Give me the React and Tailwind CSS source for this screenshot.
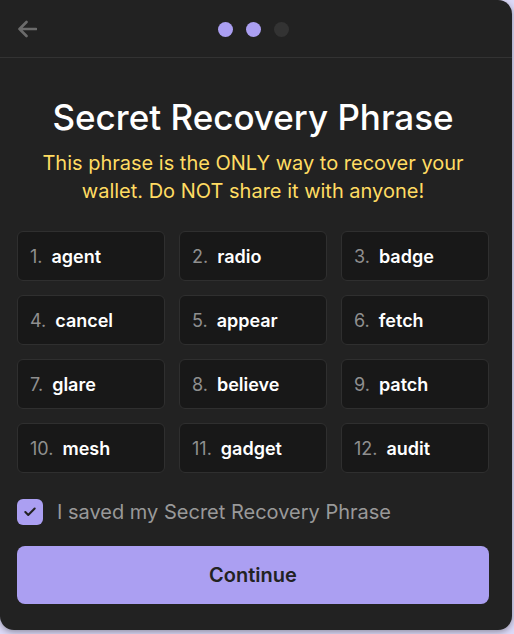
import { Check } from 'lucide-react';

const words = [
  'agent', 'radio', 'badge',
  'cancel', 'appear', 'fetch',
  'glare', 'believe', 'patch',
  'mesh', 'gadget', 'audit',
];

function BackArrow() {
  return (
    <svg width="20" height="18" viewBox="0 0 20 18" fill="none" className="absolute left-0">
      <path d="M19 9H2.5M9.5 2L2.5 9L9.5 16" stroke="#6b6b6b" strokeWidth="2.6" strokeLinecap="round" strokeLinejoin="round" />
    </svg>
  );
}

export default function App() {
  return (
    <div className="min-h-screen w-full bg-[#dcd9f7] font-['Inter',sans-serif]">
      <div className="flex h-[630px] w-[512px] flex-col rounded-tr-[14px] rounded-b-[14px] bg-[#222222] shadow-[0_2px_6px_rgba(0,0,0,0.35)]">
        {/* Header */}
        <div className="flex h-[58px] shrink-0 items-center border-b border-[#333333] pl-[17px] pr-[23px]">
          <div className="relative flex w-full items-center justify-center">
            <BackArrow />
            <div className="flex items-center gap-[13px] pt-[1px]">
              <span className="h-[15px] w-[15px] rounded-full bg-[#ab9ff2]" />
              <span className="h-[15px] w-[15px] rounded-full bg-[#ab9ff2]" />
              <span className="h-[15px] w-[15px] rounded-full bg-[#333333]" />
            </div>
          </div>
        </div>

        {/* Body */}
        <div className="flex flex-1 flex-col pl-[17px] pr-[23px]">
          <h1 className="mt-[39px] text-center text-[35px] font-medium leading-[40px] text-white">
            Secret Recovery Phrase
          </h1>
          <p className="mt-[12px] px-[10px] text-center text-[20px] leading-[28px] text-[#ffdc62]">
            This phrase is the ONLY way to recover your wallet. Do NOT share it with anyone!
          </p>

          <div className="mt-[26px] grid grid-cols-3 gap-[14px]">
            {words.map((w, i) => (
              <div
                key={w}
                className="flex h-[50px] items-center rounded-[6px] border border-[#2f2f2f] bg-[#181818] px-[12px] pt-[2px]"
              >
                <div className="flex items-baseline gap-[9px] leading-[24px]">
                  <span className="text-[18px] text-[#8f8f8f]">{i + 1}.</span>
                  <span className="text-[18px] font-semibold text-white">{w}</span>
                </div>
              </div>
            ))}
          </div>

          <label className="mt-[25px] flex items-center gap-[14px]">
            <span className="flex h-[26px] w-[26px] items-center justify-center rounded-[6px] bg-[#ab9ff2]">
              <Check className="h-[14px] w-[14px] text-[#222222]" strokeWidth={3.5} />
            </span>
            <span className="text-[20px] leading-[28px] text-[#999999]">I saved my Secret Recovery Phrase</span>
          </label>

          <button className="mt-[20px] h-[58px] w-full rounded-[8px] bg-[#ab9ff2] text-[20px] font-semibold text-[#222222]">
            Continue
          </button>
        </div>
      </div>
    </div>
  );
}
